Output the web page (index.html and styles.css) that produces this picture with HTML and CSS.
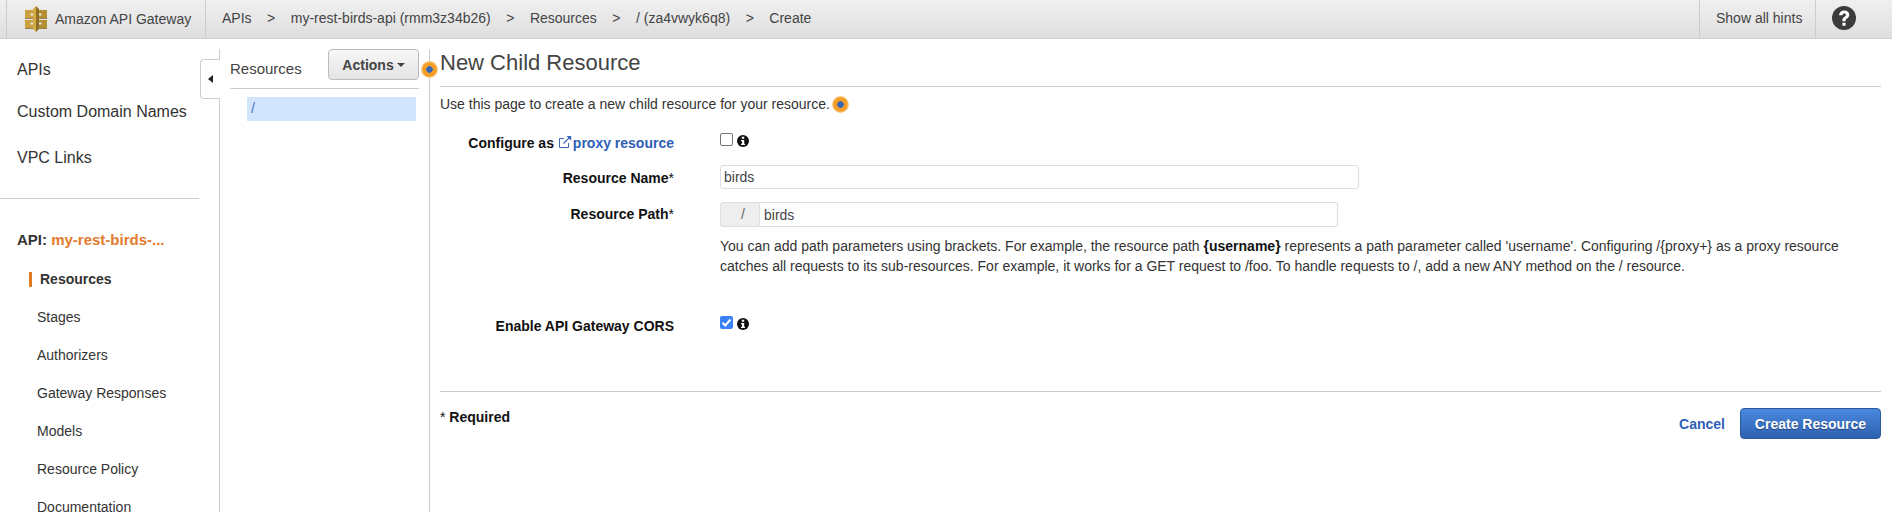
FILE: index.html
```html
<!DOCTYPE html>
<html lang="en">
<head>
<meta charset="utf-8">
<title>Amazon API Gateway</title>
<link rel="stylesheet" href="styles.css">
</head>
<body>
<header class="topbar">
  <div class="brand">
    <svg class="logo" viewBox="0 0 22 26" width="22" height="26">
      <path fill="#c9a23f" d="M0 4h8v3.500H5.500v2H8V12H0zM0 14h8v2.500H5.500v2H8V22H0z"/>
      <path fill="#b48f33" d="M22 4h-8v3.500h2.500v2H14V12h8zM22 14h-8v2.500h2.500v2H14V22h8z"/>
      <path fill="#d3ac45" d="M8 3 11 0v26l-3-3z"/>
      <path fill="#8f6f28" d="M14 3 11 0v26l3-3z"/>
      <path fill="#7d6024" d="M0 12h8v.700H0zM14 12h8v.700h-8zM0 22h8v.700H0zM14 22h8v.700h-8z"/>
    </svg>
    <span>Amazon API Gateway</span>
  </div>
  <nav class="crumbs">
    <a>APIs</a><i>&gt;</i><a>my-rest-birds-api (rmm3z34b26)</a><i>&gt;</i><a>Resources</a><i>&gt;</i><a>/ (za4vwyk6q8)</a><i>&gt;</i><a>Create</a>
  </nav>
  <div class="hints">Show all hints</div>
  <div class="help">
    <svg viewBox="0 0 24 24" width="24" height="24">
      <circle cx="12" cy="12" r="12" fill="#3b3b3b"/>
      <path fill="#fff" d="M7 9.200C7.200 6.200 9.400 4.500 12.300 4.500c2.900 0 5 1.700 5 4.300 0 2-1.100 3-2.300 3.800-1 .7-1.400 1.100-1.400 2.200v.4h-3.200v-.8c0-1.800.7-2.700 2-3.600 1-.7 1.500-1.100 1.500-1.900 0-.9-.7-1.400-1.600-1.400-1.100 0-1.700.6-1.800 1.700zM10.400 16.700h3.200v3h-3.200z"/>
    </svg>
  </div>
</header>
<div class="shell">
  <aside class="sidebar">
    <ul class="primary">
      <li>APIs</li>
      <li>Custom Domain Names</li>
      <li class="vpc">VPC Links</li>
    </ul>
    <div class="api-title">API: <span>my-rest-birds-...</span></div>
    <ul class="secondary">
      <li class="active"><span>Resources</span></li>
      <li>Stages</li>
      <li>Authorizers</li>
      <li>Gateway Responses</li>
      <li>Models</li>
      <li>Resource Policy</li>
      <li>Documentation</li>
    </ul>
    <div class="collapse"><b></b></div>
  </aside>
  <section class="tree">
    <div class="tree-head">
      <span>Resources</span>
      <button class="actions">Actions<b></b></button>
    </div>
    <div class="tree-row">/</div>
    <span class="dot dot-actions"></span>
  </section>
  <main class="main">
    <h1>New Child Resource</h1>
    <p class="intro">Use this page to create a new child resource for your resource.<span class="dot dot-inline"></span></p>
    <div class="row row-proxy">
      <label>Configure as <a class="ext"><svg viewBox="0 0 14 14" width="14" height="14"><path fill="none" stroke="#3b65b5" stroke-width="1" d="M10.500 8v4.500H1.500V3.500H6"/><path fill="none" stroke="#3b65b5" stroke-width="1.100" d="M5.500 8.500 12 2"/><path fill="#3b65b5" d="M8.500 1h4.700v4.700z"/></svg>proxy resource</a></label>
      <div class="field"><span class="check"></span><svg class="info" viewBox="0 0 12 12" width="12" height="12"><circle cx="6" cy="6" r="6" fill="#111"/><path fill="#fff" d="M4.800 1.800h2.400v2H4.800zM4 5h3.200v3.700H8v1.300H4V8.700h1V6.300H4z"/></svg></div>
    </div>
    <div class="row row-name">
      <label>Resource Name<em>*</em></label>
      <div class="field"><input class="text name" type="text" value="birds"></div>
    </div>
    <div class="row row-path">
      <label>Resource Path<em>*</em></label>
      <div class="field path"><span class="addon">/</span><input class="text" type="text" value="birds"></div>
    </div>
    <p class="note">You can add path parameters using brackets. For example, the resource path <b>{username}</b> represents a path parameter called 'username'. Configuring /{proxy+} as a proxy resource catches all requests to its sub-resources. For example, it works for a GET request to /foo. To handle requests to /, add a new ANY method on the / resource.</p>
    <div class="row row-cors">
      <label>Enable API Gateway CORS</label>
      <div class="field"><span class="check on"><svg viewBox="0 0 13 13" width="13" height="13"><path fill="none" stroke="#fff" stroke-width="2" d="M2.500 6.800 5.300 9.500 10.500 3.500"/></svg></span><svg class="info" viewBox="0 0 12 12" width="12" height="12"><circle cx="6" cy="6" r="6" fill="#111"/><path fill="#fff" d="M4.800 1.800h2.400v2H4.800zM4 5h3.200v3.700H8v1.300H4V8.700h1V6.300H4z"/></svg></div>
    </div>
    <footer class="foot">
      <div class="req"><span>*</span> Required</div>
      <div class="buttons"><a class="cancel">Cancel</a><button class="create">Create Resource</button></div>
    </footer>
  </main>
</div>
</body>
</html>
```
FILE: styles.css
```css
* { box-sizing: border-box; }
html, body { margin: 0; height: 512px; overflow: hidden; background: #fff; }
body { font-family: "Liberation Sans", Arial, sans-serif; font-size: 14px; color: #333; }
ul { list-style: none; margin: 0; padding: 0; }

.topbar { display: flex; align-items: stretch; height: 39px; padding-left: 6px; background: linear-gradient(#f0f0f0, #dedede); border-bottom: 1px solid #d0d0d0; color: #444; line-height: 36px; }
.brand { display: flex; align-items: center; gap: 8px; width: 200px; padding-left: 18px; border-left: 1px solid #ccc; border-right: 1px solid #ccc; }
.logo { flex: none; }
.crumbs { flex: 1; padding-left: 16px; }
.crumbs i { font-style: normal; padding: 0 15.500px; }
.hints { width: 117px; padding-left: 16px; border-left: 1px solid #ccc; border-right: 1px solid #ccc; }
.help { flex: none; width: 76px; padding: 6px 0 0 16px; line-height: 0; }

.shell { display: flex; height: 473px; padding-top: 10px; }
.sidebar { position: relative; flex: none; width: 220px; border-right: 1px solid #ccc; }
.primary { width: 199px; height: 150px; border-bottom: 1px solid #ccc; font-size: 16px; }
.primary li { height: 42px; line-height: 42px; padding-left: 17px; }
.primary .vpc { margin-top: 4px; }
.api-title { margin-top: 29px; padding-left: 17px; font-weight: bold; line-height: 24px; font-size: 15px; }
.api-title span { color: #e37a2c; }
.secondary { margin-top: 8px; }
.secondary li { height: 38px; line-height: 38px; padding-left: 37px; }
.secondary .active { padding-left: 29px; font-weight: bold; }
.secondary .active span { display: inline-block; height: 15px; line-height: 15px; padding-left: 8px; border-left: 3px solid #dd7a22; }
.collapse { position: absolute; top: 10px; right: -1px; width: 20px; height: 40px; background: #fff; border: 1px solid #ccc; border-right: 0; border-radius: 4px 0 0 4px; }
.collapse b { position: absolute; left: 7px; top: 15px; border: 4px solid transparent; border-left: 0; border-right: 5px solid #222; }

.tree { position: relative; flex: none; width: 210px; padding: 0 10px; border-right: 1px solid #ccc; }
.tree-head { display: flex; justify-content: space-between; height: 40px; border-bottom: 1px solid #ccc; font-size: 15px; color: #444; }
.tree-head span { padding-top: 11px; line-height: 18px; }
.actions { width: 91px; height: 31px; padding: 0; background: linear-gradient(#f7f7f7, #e4e4e4); border: 1px solid #bbb; border-radius: 4px; font: bold 14px "Liberation Sans", Arial, sans-serif; color: #444; }
.actions b { display: inline-block; margin-left: 3px; vertical-align: 3px; border: 4px solid transparent; border-top-color: #444; border-bottom: 0; }
.tree-row { width: 169px; height: 24px; margin: 8px 0 0 17px; padding-left: 4px; background: #d2e5fc; color: #4a74c5; line-height: 22px; font-size: 14px; }

.dot { display: inline-block; width: 17px; height: 17px; border-radius: 50%; background: radial-gradient(circle, #3a66b8 0 3px, #f49e28 3.500px 6.500px, #f8bb6c 7.500px, #fbd5a2 8.500px); }
.dot-actions { position: absolute; top: 12px; right: -9px; }
.dot-inline { margin-left: 2px; vertical-align: -4px; }

.main { flex: 1; min-width: 0; padding: 0 11px 0 10px; }
h1 { height: 38px; margin: 0; border-bottom: 1px solid #ccc; font-size: 22px; font-weight: normal; line-height: 27px; color: #444; }
.intro { height: 34px; margin: 0; line-height: 34px; }
.row { display: grid; grid-template-columns: 234px 1fr; column-gap: 46px; }
.row label { text-align: right; font-weight: bold; color: #111; line-height: 20px; }
.row em { font-style: normal; font-weight: normal; }
.ext { color: #2f5eb8; }
.ext svg { margin-right: 1px; vertical-align: -1px; }
.field { display: flex; }
.row-proxy { height: 32px; margin-top: 12px; }
.row-name { height: 24px; }
.row-name label { padding-top: 2px; line-height: 22px; }
.row-path { height: 25px; margin-top: 13px; }
.row-path label { line-height: 25px; }
.check { display: block; width: 13px; height: 13px; border: 1px solid #767676; border-radius: 2px; background: #fff; line-height: 0; }
.check.on { border: 0; background: #3b82f6; }
.info { margin: 2px 0 0 4px; }
.text { height: 100%; padding: 0 0 0 3px; border: 1px solid #ddd; border-radius: 3px; font: 14px "Liberation Sans", Arial, sans-serif; color: #444; outline: 0; }
.name { width: 639px; }
.path { width: 618px; }
.path .text { flex: 1; min-width: 0; padding-left: 4px; border-left: 0; border-radius: 0 3px 3px 0; }
.addon { flex: none; width: 40px; padding-left: 6px; background: #eee; border: 1px solid #ddd; border-radius: 3px 0 0 3px; color: #666; line-height: 23px; text-align: center; }
.note { margin: 9px 12px 0 280px; line-height: 20px; color: #333; }
.note b { color: #111; }
.row-cors { height: 76px; margin-top: 40px; border-bottom: 1px solid #ccc; }
.foot { display: flex; justify-content: space-between; }
.req { padding-top: 15px; font-weight: bold; line-height: 20px; color: #111; }
.req span { font-weight: normal; }
.buttons { display: flex; align-items: center; gap: 15px; padding-top: 16px; }
.cancel { color: #2f5eb8; font-weight: bold; }
.create { width: 141px; height: 31px; padding: 0; background: linear-gradient(#4a88e0, #2e62b0); border: 1px solid #2b5a9e; border-radius: 4px; color: #fff; font: bold 14px "Liberation Sans", Arial, sans-serif; text-shadow: 0 1px 1px rgba(0,0,0,.4); }
```
